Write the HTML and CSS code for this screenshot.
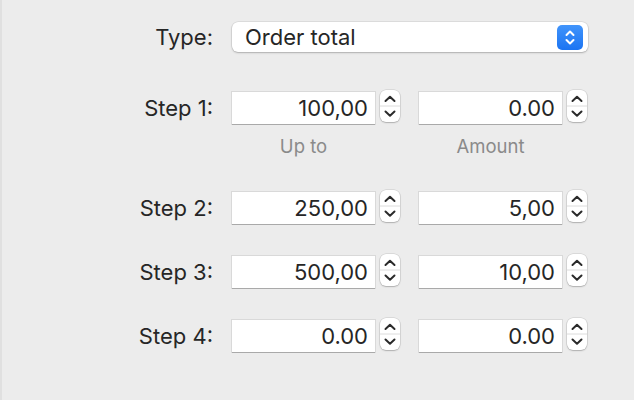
FILE: index.html
```html
<!DOCTYPE html>
<html>
<head>
<meta charset="utf-8">
<link rel="stylesheet" href="styles.css">
</head>
<body>
<div class="panel">
  <div class="row row-type">
    <span class="label">Type:</span>
    <div class="popup">
      <span class="popup-text">Order total</span>
      <span class="popup-btn">
        <svg width="26" height="25" viewBox="0 0 26 25"><polyline points="9.5,10 13,6.5 16.5,10" fill="none" stroke="#fff" stroke-width="2" stroke-linecap="round" stroke-linejoin="round"/><polyline points="9.5,15 13,18.5 16.5,15" fill="none" stroke="#fff" stroke-width="2" stroke-linecap="round" stroke-linejoin="round"/></svg>
      </span>
    </div>
  </div>

  <div class="row row-step row-first">
    <span class="label">Step 1:</span>
    <div class="field">100,00</div>
    <div class="stepper"><svg width="20" height="32" viewBox="0 0 20 32"><line x1="0" y1="16" x2="20" y2="16" stroke="#dcdcdc" stroke-width="1"/><polyline points="5.5,11 10,6.8 14.5,11" fill="none" stroke="#2a2a2a" stroke-width="2" stroke-linecap="round" stroke-linejoin="round"/><polyline points="5.5,21.5 10,25.7 14.5,21.5" fill="none" stroke="#2a2a2a" stroke-width="2" stroke-linecap="round" stroke-linejoin="round"/></svg></div>
    <div class="field field-second">0.00</div>
    <div class="stepper"><svg width="20" height="32" viewBox="0 0 20 32"><line x1="0" y1="16" x2="20" y2="16" stroke="#dcdcdc" stroke-width="1"/><polyline points="5.5,11 10,6.8 14.5,11" fill="none" stroke="#2a2a2a" stroke-width="2" stroke-linecap="round" stroke-linejoin="round"/><polyline points="5.5,21.5 10,25.7 14.5,21.5" fill="none" stroke="#2a2a2a" stroke-width="2" stroke-linecap="round" stroke-linejoin="round"/></svg></div>
  </div>

  <div class="hints">
    <span class="hint hint-upto">Up to</span>
    <span class="hint hint-amount">Amount</span>
  </div>

  <div class="row row-step row-second">
    <span class="label">Step 2:</span>
    <div class="field">250,00</div>
    <div class="stepper"><svg width="20" height="32" viewBox="0 0 20 32"><line x1="0" y1="16" x2="20" y2="16" stroke="#dcdcdc" stroke-width="1"/><polyline points="5.5,11 10,6.8 14.5,11" fill="none" stroke="#2a2a2a" stroke-width="2" stroke-linecap="round" stroke-linejoin="round"/><polyline points="5.5,21.5 10,25.7 14.5,21.5" fill="none" stroke="#2a2a2a" stroke-width="2" stroke-linecap="round" stroke-linejoin="round"/></svg></div>
    <div class="field field-second">5,00</div>
    <div class="stepper"><svg width="20" height="32" viewBox="0 0 20 32"><line x1="0" y1="16" x2="20" y2="16" stroke="#dcdcdc" stroke-width="1"/><polyline points="5.5,11 10,6.8 14.5,11" fill="none" stroke="#2a2a2a" stroke-width="2" stroke-linecap="round" stroke-linejoin="round"/><polyline points="5.5,21.5 10,25.7 14.5,21.5" fill="none" stroke="#2a2a2a" stroke-width="2" stroke-linecap="round" stroke-linejoin="round"/></svg></div>
  </div>

  <div class="row row-step">
    <span class="label">Step 3:</span>
    <div class="field">500,00</div>
    <div class="stepper"><svg width="20" height="32" viewBox="0 0 20 32"><line x1="0" y1="16" x2="20" y2="16" stroke="#dcdcdc" stroke-width="1"/><polyline points="5.5,11 10,6.8 14.5,11" fill="none" stroke="#2a2a2a" stroke-width="2" stroke-linecap="round" stroke-linejoin="round"/><polyline points="5.5,21.5 10,25.7 14.5,21.5" fill="none" stroke="#2a2a2a" stroke-width="2" stroke-linecap="round" stroke-linejoin="round"/></svg></div>
    <div class="field field-second">10,00</div>
    <div class="stepper"><svg width="20" height="32" viewBox="0 0 20 32"><line x1="0" y1="16" x2="20" y2="16" stroke="#dcdcdc" stroke-width="1"/><polyline points="5.5,11 10,6.8 14.5,11" fill="none" stroke="#2a2a2a" stroke-width="2" stroke-linecap="round" stroke-linejoin="round"/><polyline points="5.5,21.5 10,25.7 14.5,21.5" fill="none" stroke="#2a2a2a" stroke-width="2" stroke-linecap="round" stroke-linejoin="round"/></svg></div>
  </div>

  <div class="row row-step">
    <span class="label">Step 4:</span>
    <div class="field">0.00</div>
    <div class="stepper"><svg width="20" height="32" viewBox="0 0 20 32"><line x1="0" y1="16" x2="20" y2="16" stroke="#dcdcdc" stroke-width="1"/><polyline points="5.5,11 10,6.8 14.5,11" fill="none" stroke="#2a2a2a" stroke-width="2" stroke-linecap="round" stroke-linejoin="round"/><polyline points="5.5,21.5 10,25.7 14.5,21.5" fill="none" stroke="#2a2a2a" stroke-width="2" stroke-linecap="round" stroke-linejoin="round"/></svg></div>
    <div class="field field-second">0.00</div>
    <div class="stepper"><svg width="20" height="32" viewBox="0 0 20 32"><line x1="0" y1="16" x2="20" y2="16" stroke="#dcdcdc" stroke-width="1"/><polyline points="5.5,11 10,6.8 14.5,11" fill="none" stroke="#2a2a2a" stroke-width="2" stroke-linecap="round" stroke-linejoin="round"/><polyline points="5.5,21.5 10,25.7 14.5,21.5" fill="none" stroke="#2a2a2a" stroke-width="2" stroke-linecap="round" stroke-linejoin="round"/></svg></div>
  </div>
</div>
</body>
</html>
```

FILE: styles.css
```css
html, body {
  margin: 0;
  padding: 0;
  background: #ececec;
}
body {
  width: 634px;
  height: 400px;
  overflow: hidden;
  font-family: Inter, "Liberation Sans", sans-serif;
  font-size: 22px;
  color: #262626;
}
.panel {
  box-sizing: border-box;
  height: 400px;
  border-left: 2px solid #e0e0e0;
  padding-top: 22px;
  display: flex;
  flex-direction: column;
}
.row {
  display: flex;
  align-items: center;
}
.label {
  width: 211px;
  text-align: right;
  margin-right: 19px;
  flex: none;
  line-height: 26px;
}
.row-type {
  height: 30px;
}
.popup {
  width: 356px;
  height: 30px;
  box-sizing: border-box;
  background: #fff;
  border-radius: 6px;
  box-shadow: 0 0 0 0.5px rgba(0,0,0,0.12), 0 1px 2px rgba(0,0,0,0.22);
  display: flex;
  align-items: center;
  justify-content: space-between;
  padding: 0 5px 0 13px;
}
.popup-text {
  line-height: 26px;
}
.popup-btn {
  width: 26px;
  height: 25px;
  border-radius: 5px;
  background: linear-gradient(#4194fb, #1b74f2);
  display: flex;
}
.row-step {
  height: 32px;
  margin-top: 32px;
}
.row-first {
  margin-top: 40px;
}
.row-second {
  margin-top: 36px;
}
.field {
  width: 143px;
  height: 32px;
  box-sizing: border-box;
  background: #fff;
  box-shadow: 0 0 0 1px rgba(0,0,0,0.08), 0 1px 0 rgba(0,0,0,0.22);
  text-align: right;
  padding-right: 7px;
  line-height: 32px;
  flex: none;
}
.field-second {
  margin-left: 19px;
}
.stepper {
  width: 20px;
  height: 32px;
  margin-left: 5px;
  margin-top: -4px;
  background: #fff;
  border-radius: 6px;
  box-shadow: 0 0 0 0.5px rgba(0,0,0,0.15), 0 1px 1.5px rgba(0,0,0,0.2);
  display: flex;
  flex: none;
}
.hints {
  display: flex;
  margin-top: 12px;
  height: 20px;
  line-height: 20px;
  font-size: 18.5px;
  color: #8a8a8a;
}
.hint {
  width: 143px;
  text-align: center;
}
.hint-upto {
  margin-left: 230px;
}
.hint-amount {
  margin-left: 44px;
}
```
